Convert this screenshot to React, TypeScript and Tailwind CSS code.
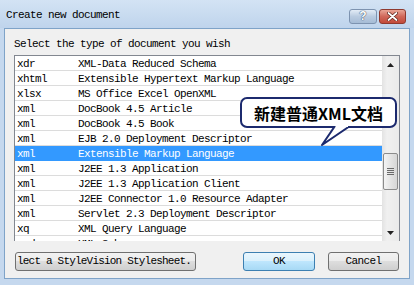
import React from 'react';

const rows: [string, string][] = [
  ['xdr', 'XML-Data Reduced Schema'],
  ['xhtml', 'Extensible Hypertext Markup Language'],
  ['xlsx', 'MS Office Excel OpenXML'],
  ['xml', 'DocBook 4.5 Article'],
  ['xml', 'DocBook 4.5 Book'],
  ['xml', 'EJB 2.0 Deployment Descriptor'],
  ['xml', 'Extensible Markup Language'],
  ['xml', 'J2EE 1.3 Application'],
  ['xml', 'J2EE 1.3 Application Client'],
  ['xml', 'J2EE Connector 1.0 Resource Adapter'],
  ['xml', 'Servlet 2.3 Deployment Descriptor'],
  ['xq', 'XML Query Language'],
  ['xsd', 'XML Schema'],
];

const mono = "font-[family-name:'Liberation_Mono','Courier_New',monospace] text-[11px] tracking-[-0.6px] whitespace-nowrap";

function ScrollBar() {
  return (
    <div className="w-[17px] shrink-0 flex flex-col bg-[linear-gradient(90deg,#e3e3e3,#f0f0f0_30%,#eaeaea)]">
      <div className="h-[17px] flex items-center justify-center">
        <svg width="7" height="4" viewBox="0 0 7 4">
          <path d="M3.5 0 L7 4 L0 4 Z" fill="#222" />
        </svg>
      </div>
      <div className="h-[80px]" />
      <div className="mx-[1px] h-[37px] rounded-[2px] border border-[#8b8b8b] bg-[linear-gradient(90deg,#f4f4f4,#e4e4e4_50%,#d6d6d6)] flex flex-col items-center justify-center gap-[1px]">
        <div className="w-[7px] h-[1px] bg-[#6a6a6a]" />
        <div className="w-[7px] h-[1px] bg-[#6a6a6a]" />
        <div className="w-[7px] h-[1px] bg-[#6a6a6a]" />
        <div className="w-[7px] h-[1px] bg-[#6a6a6a]" />
      </div>
      <div className="flex-1" />
      <div className="h-[17px] flex items-center justify-center">
        <svg width="7" height="4" viewBox="0 0 7 4">
          <path d="M0 0 L7 0 L3.5 4 Z" fill="#222" />
        </svg>
      </div>
    </div>
  );
}

export default function App() {
  return (
    <div className="w-[414px] h-[285px] flex flex-col bg-[#c5d8ee] overflow-hidden relative">
      {/* Title bar */}
      <div className="h-[28px] shrink-0 flex items-center pl-[6px] pr-[8px] bg-[linear-gradient(180deg,#d3e3f4,#bfd4ec)]">
        <span className={`${mono} text-black flex-1 pt-[2px]`}>Create new document</span>
        <div className="flex gap-[2px] mt-[4px]">
          <div className="w-[28px] h-[15px] rounded-[3px] border border-[#7d93b0] bg-[linear-gradient(180deg,#e3ecf6,#b9cbe0_50%,#a6bcd6)] flex items-center justify-center">
            <span className="font-[family-name:'Liberation_Sans',sans-serif] text-[12px] font-bold leading-none text-white [text-shadow:0_0_1px_#2b3e5c,0_0_1px_#2b3e5c]">?</span>
          </div>
          <div className="w-[27px] h-[15px] rounded-[3px] border border-[#8f3a2f] bg-[linear-gradient(180deg,#e9a596,#d0685a_50%,#c24a3a)] flex items-center justify-center">
            <svg width="11" height="9" viewBox="0 0 11 9">
              <path d="M1.5 1 L9.5 8 M9.5 1 L1.5 8" stroke="#5a1f16" strokeWidth="3.2" strokeLinecap="round" />
              <path d="M1.5 1 L9.5 8 M9.5 1 L1.5 8" stroke="#fff" strokeWidth="1.8" strokeLinecap="round" />
            </svg>
          </div>
        </div>
      </div>

      {/* Body */}
      <div className="flex-1 mx-[4px] mb-[6px] bg-[#f0f0f0] border border-[#7fa3c8] flex flex-col pt-[9px] px-[9px]">
        <div className={`${mono} text-black h-[12px] leading-[12px]`}>Select the type of document you wish</div>
        <div className="mt-[5px] h-[186px] shrink-0 border border-[#828790] border-b-0 bg-white flex overflow-hidden">
          <div className="flex-1 flex flex-col">
            {rows.map(([ext, name], i) => (
              <div
                key={i}
                className={`h-[15px] shrink-0 flex items-center pt-[2px] border-b ${
                  i === 6 ? 'bg-[#3399ff] text-white border-[#3399ff]' : 'text-black border-[#dcdcdc]'
                } ${mono}`}
              >
                <span className="w-[63px] pl-[2px] shrink-0">{ext}</span>
                <span>{name}</span>
              </div>
            ))}
          </div>
          <ScrollBar />
        </div>
        <div className="mt-[11px] flex items-center">
          <button className={`ml-[1px] w-[181px] h-[19px] overflow-hidden rounded-[3px] border border-[#707070] bg-[linear-gradient(180deg,#f2f2f2,#ebebeb_50%,#dddddd_50%,#cfcfcf)] text-left pl-[1px] text-black ${mono} tracking-[-0.8px]`}>
            lect a StyleVision Stylesheet.
          </button>
          <div className="flex-1" />
          <button className={`w-[72px] h-[19px] rounded-[3px] border border-[#3c7fb1] bg-[linear-gradient(180deg,#eaf6fd,#d9f0fc_50%,#bee6fd_50%,#a7d9f5)] text-black ${mono}`}>
            OK
          </button>
          <button className={`ml-[13px] w-[71px] h-[19px] rounded-[3px] border border-[#707070] bg-[linear-gradient(180deg,#f2f2f2,#ebebeb_50%,#dddddd_50%,#cfcfcf)] text-black ${mono}`}>
            Cancel
          </button>
          <div className="w-[1px]" />
        </div>
      </div>

      {/* Callout */}
      <div className="absolute left-[240px] top-[97px] w-[157px] h-[31px] rounded-[7px] border-2 border-[#1c2a6e] bg-white flex items-center justify-center">
        <span className="font-[family-name:'Noto_Sans_CJK_SC','Noto_Sans',sans-serif] font-bold text-[16px] leading-none text-black">新建普通XML文档</span>
      </div>
      <svg className="absolute left-[318px] top-[126px]" width="40" height="22" viewBox="0 0 40 22">
        <path d="M17 0 L4 19 L32 0" fill="#fff" stroke="#1c2a6e" strokeWidth="2" strokeLinejoin="round" />
        <rect x="18" y="-2" width="12" height="3" fill="#fff" />
      </svg>
    </div>
  );
}
